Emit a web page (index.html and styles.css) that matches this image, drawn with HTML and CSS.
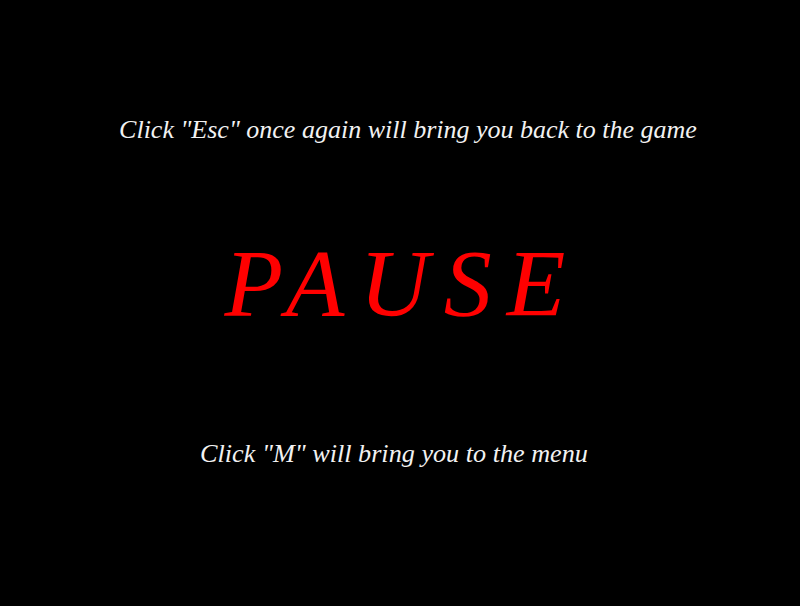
FILE: index.html
```html
<!DOCTYPE html>
<html>
<head>
<meta charset="utf-8">
<link rel="stylesheet" href="styles.css">
</head>
<body>
<main class="screen">
  <p class="hint hint-top">Click "Esc" once again will bring you back to the game</p>
  <h1 class="title">PAUSE</h1>
  <p class="hint hint-bottom">Click "M" will bring you to the menu</p>
</main>
</body>
</html>
```
FILE: styles.css
```css
html, body {
  margin: 0;
  padding: 0;
  background: #000;
}
.screen {
  width: 800px;
  height: 606px;
  display: flex;
  flex-direction: column;
  align-items: center;
  font-family: "Liberation Serif", "DejaVu Serif", serif;
  font-style: italic;
}
.hint {
  margin: 0;
  color: #f2f2f2;
  font-size: 26px;
  line-height: 30px;
}
.hint-top {
  margin-top: 115px;
  padding-left: 16px;
}
.title {
  margin: 91px 0 0 0;
  color: #ff0000;
  font-weight: normal;
  font-size: 96px;
  line-height: 96px;
  letter-spacing: 15px;
  padding-left: 5px;
}
.hint-bottom {
  margin-top: 107px;
  padding-right: 12px;
  font-size: 26.2px;
}
```
